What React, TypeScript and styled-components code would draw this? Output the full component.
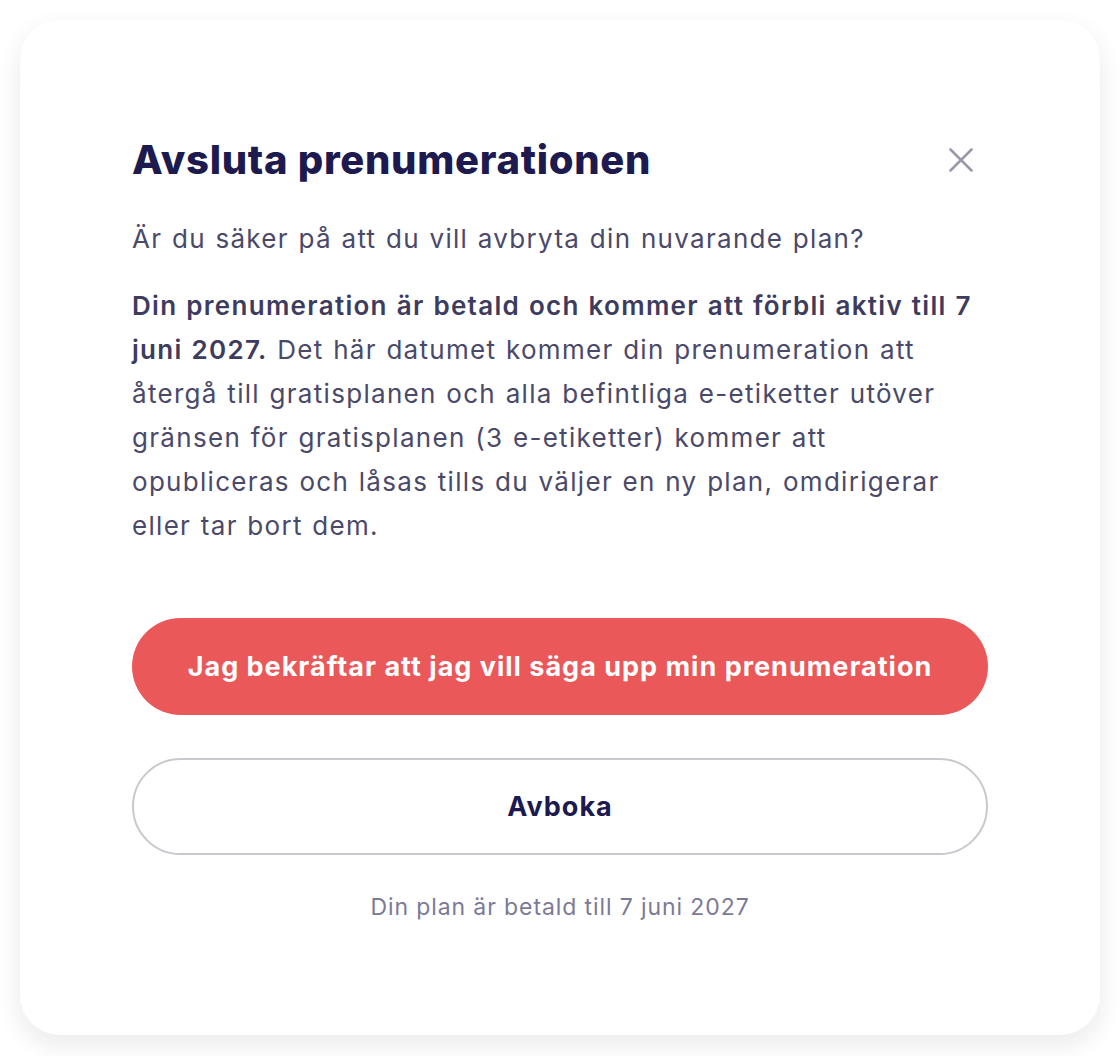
import React from 'react';
import styled, { createGlobalStyle } from 'styled-components';

const GlobalStyle = createGlobalStyle`
	html, body {
		margin: 0;
		padding: 0;
		background: #ffffff;
	}
	body {
		font-family: Inter, 'Noto Sans', sans-serif;
		-webkit-font-smoothing: antialiased;
	}
`;

const Page = styled.div`
	padding: 20px 20px 21px;
	box-sizing: border-box;
	width: 1120px;
	min-height: 1056px;
`;

const Card = styled.div`
	background: #ffffff;
	border-radius: 40px;
	box-shadow: 0 10px 26px rgba(20, 20, 40, 0.09);
	padding: 112px;
	display: flex;
	flex-direction: column;
`;

const Header = styled.div`
	display: flex;
	align-items: center;
	justify-content: space-between;
`;

const Title = styled.h2`
	margin: 0;
	font-size: 40px;
	line-height: 56px;
	font-weight: 800;
	color: #1c1a4e;
	letter-spacing: 0.7px;
`;

const CloseButton = styled.button`
	width: 54px;
	height: 54px;
	border: none;
	background: none;
	padding: 0;
	display: flex;
	align-items: center;
	justify-content: center;
	cursor: pointer;
	color: #9b9aa8;
`;

const Text = styled.p<{ $gap: number }>`
	margin: ${(p) => p.$gap}px 0 0;
	font-size: 26px;
	line-height: 44px;
	letter-spacing: 1.3px;
	word-spacing: 1px;
	color: #4a4969;
	font-weight: 400;

	strong {
		font-weight: 600;
		color: #3d3c5e;
	}
`;

const Actions = styled.div`
	display: flex;
	flex-direction: column;
	gap: 43px;
	margin-top: 70px;
`;

const Button = styled.button<{ $variant: 'danger' | 'outline' }>`
	height: 97px;
	border-radius: 49px;
	box-sizing: border-box;
	font-family: inherit;
	font-size: 27px;
	letter-spacing: 1px;
	font-weight: 700;
	cursor: pointer;
	background: ${(p) => (p.$variant === 'danger' ? '#ea5859' : '#ffffff')};
	color: ${(p) => (p.$variant === 'danger' ? '#ffffff' : '#1c1a4e')};
	border: ${(p) => (p.$variant === 'danger' ? 'none' : '2px solid #c8c8ce')};
`;

const Footnote = styled.div`
	margin-top: 36px;
	text-align: center;
	font-size: 23px;
	line-height: 32px;
	letter-spacing: 0.9px;
	color: #7b7a96;
`;

function CloseIcon() {
	return (
		<svg width="24" height="24" viewBox="0 0 24 24" fill="none">
			<path
				d="M1.5 1.5L22.5 22.5M22.5 1.5L1.5 22.5"
				stroke="currentColor"
				strokeWidth="2.6"
				strokeLinecap="round"
			/>
		</svg>
	);
}

export default function App() {
	return (
		<Page>
			<GlobalStyle />
			<Card>
				<Header>
					<Title>Avsluta prenumerationen</Title>
					<CloseButton aria-label="Stäng">
						<CloseIcon />
					</CloseButton>
				</Header>
				<Text $gap={29}>Är du säker på att du vill avbryta din nuvarande plan?</Text>
				<Text $gap={23}>
					<strong>
						Din prenumeration är betald och kommer att förbli aktiv till 7<br />
						juni 2027.
					</strong>{' '}
					Det här datumet kommer din prenumeration att
					<br />
					återgå till gratisplanen och alla befintliga e-etiketter utöver
					<br />
					gränsen för gratisplanen (3 e-etiketter) kommer att
					<br />
					opubliceras och låsas tills du väljer en ny plan, omdirigerar
					<br />
					eller tar bort dem.
				</Text>
				<Actions>
					<Button $variant="danger">Jag bekräftar att jag vill säga upp min prenumeration</Button>
					<Button $variant="outline">Avboka</Button>
				</Actions>
				<Footnote>Din plan är betald till 7 juni 2027</Footnote>
			</Card>
		</Page>
	);
}
